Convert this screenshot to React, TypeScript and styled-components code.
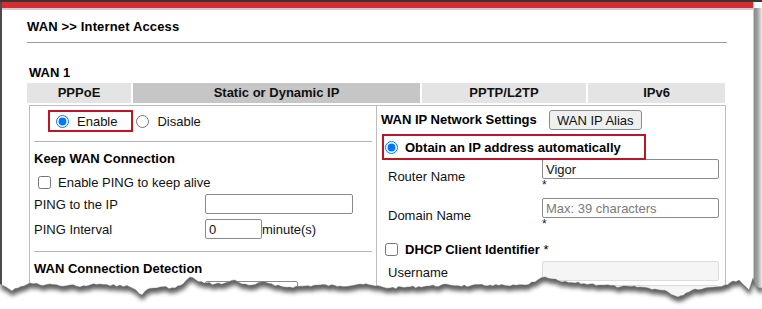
import React from "react";
import styled, { createGlobalStyle } from "styled-components";

const GlobalStyle = createGlobalStyle`
  html, body {
    margin: 0;
    padding: 0;
    background: #fff;
  }
  body {
    font-family: "Liberation Sans", Arial, sans-serif;
    font-size: 13px;
    color: #111;
  }
`;

// ---- torn bottom edge (drawing) ----
const tearKeys: [number, number][] = [
  [0, 284], [6, 287], [12, 291], [18, 288], [24, 286], [30, 283], [40, 285],
  [50, 284], [60, 286], [70, 285], [80, 287], [90, 285], [100, 284], [110, 286],
  [120, 285], [130, 287], [136, 290], [142, 295], [148, 289], [160, 287],
  [175, 288], [183, 284], [190, 277], [196, 280], [204, 283], [215, 284],
  [225, 283], [235, 280], [242, 284], [252, 285], [265, 282], [275, 286],
  [290, 287], [305, 286], [320, 285], [340, 286], [360, 284], [375, 286],
  [390, 288], [410, 287], [430, 286], [450, 285], [470, 286], [490, 285],
  [510, 286], [525, 285], [535, 282], [545, 277], [552, 279], [562, 282],
  [575, 283], [590, 284], [605, 285], [620, 287], [640, 287], [655, 289],
  [668, 292], [678, 297], [686, 293], [695, 289], [705, 288], [715, 287],
  [725, 285], [733, 281], [739, 280], [745, 286], [749, 290], [753, 278],
  [756, 286], [762, 288],
];

function buildTear() {
  const pts: [number, number][] = [];
  let seed = 7;
  const rnd = () => {
    seed = (seed * 9301 + 49297) % 233280;
    return seed / 233280;
  };
  for (let i = 0; i < tearKeys.length - 1; i++) {
    const [x0, y0] = tearKeys[i];
    const [x1, y1] = tearKeys[i + 1];
    const steps = Math.max(1, Math.round((x1 - x0) / 3));
    for (let s = 0; s < steps; s++) {
      const t = s / steps;
      const jitter = s === 0 ? 0 : (rnd() - 0.5) * 2.4;
      pts.push([x0 + (x1 - x0) * t, y0 + (y1 - y0) * t + jitter]);
    }
  }
  pts.push(tearKeys[tearKeys.length - 1]);
  return pts;
}

const tear = buildTear();
const edge = tear.map(([x, y]) => `${x.toFixed(1)},${y.toFixed(1)}`).join(" L");
const belowPath = `M${edge} L762,309 L0,309 Z`;
const paperShadow = `M${tear
  .map(([x, y]) => `${(x + 1).toFixed(1)},${(y + 5).toFixed(1)}`)
  .join(" L")} L762,240 L0,240 Z`;

function TornEdge() {
  return (
    <TearLayer width="762" height="49" viewBox="0 260 762 49">
      <defs>
        <clipPath id="below">
          <path d={belowPath} />
        </clipPath>
        <filter id="soft" x="-5%" y="-50%" width="110%" height="200%">
          <feGaussianBlur stdDeviation="2.2" />
        </filter>
      </defs>
      <path d={belowPath} fill="#fff" />
      <g clipPath="url(#below)">
        <path d={paperShadow} fill="#444" opacity="0.85" filter="url(#soft)" />
      </g>
      <path d={`M${edge}`} fill="none" stroke="#777" strokeWidth="0.6" opacity="0.7" />
    </TearLayer>
  );
}

// ---- page ----
export default function App() {
  return (
    <>
      <GlobalStyle />
      <Shell>
        <Screen>
          <RedBar />
          <Content>
            <Title>WAN &gt;&gt; Internet Access</Title>
            <TitleRule />
            <WanLabel>WAN 1</WanLabel>
            <Tabs>
              <Tab>PPPoE</Tab>
              <Tab active>Static or Dynamic IP</Tab>
              <Tab>PPTP/L2TP</Tab>
              <Tab>IPv6</Tab>
            </Tabs>
            <Panel>
              <LeftCell>
                <EnableRow>
                  <Marked>
                    <Radio type="radio" name="wan" defaultChecked />
                    Enable
                  </Marked>
                  <Choice>
                    <Radio type="radio" name="wan" />
                    Disable
                  </Choice>
                </EnableRow>
                <Rule top={5} />
                <SectionTitle>Keep WAN Connection</SectionTitle>
                <CheckRow>
                  <Check type="checkbox" />
                  Enable PING to keep alive
                </CheckRow>
                <FormRow>
                  <span>PING to the IP</span>
                  <TextInput width={148} readOnly />
                </FormRow>
                <FormRow top={5}>
                  <span>PING Interval</span>
                  <Inline>
                    <TextInput width={57} defaultValue="0" readOnly />
                    minute(s)
                  </Inline>
                </FormRow>
                <Rule top={12} />
                <SectionTitle>WAN Connection Detection</SectionTitle>
                <FormRow top={1} indent={6}>
                  <span>Mode</span>
                  <Select defaultValue="arp">
                    <option value="arp">ARP Detect</option>
                  </Select>
                </FormRow>
              </LeftCell>
              <RightCell>
                <HeaderRow>
                  <SectionTitle as="span">WAN IP Network Settings</SectionTitle>
                  <AliasButton type="button">WAN IP Alias</AliasButton>
                </HeaderRow>
                <ObtainRow>
                  <Radio type="radio" name="ip" defaultChecked />
                  Obtain an IP address automatically
                </ObtainRow>
                <FieldRow top={1}>
                  <FieldLabel>Router Name</FieldLabel>
                  <FieldStack>
                    <TextInput width={177} defaultValue="Vigor" readOnly />
                    <Star>*</Star>
                  </FieldStack>
                </FieldRow>
                <FieldRow top={7}>
                  <FieldLabel>Domain Name</FieldLabel>
                  <FieldStack>
                    <TextInput width={177} placeholder="Max: 39 characters" readOnly />
                    <Star>*</Star>
                  </FieldStack>
                </FieldRow>
                <DhcpRow>
                  <Check type="checkbox" />
                  <b>DHCP Client Identifier</b>
                  <span>&nbsp;*</span>
                </DhcpRow>
                <FieldRow top={1}>
                  <FieldLabel>Username</FieldLabel>
                  <TextInput width={177} disabled />
                </FieldRow>
                <FieldRow top={4}>
                  <FieldLabel>Password</FieldLabel>
                  <TextInput width={177} disabled />
                </FieldRow>
              </RightCell>
            </Panel>
          </Content>
        </Screen>
        <RightShadow />
        <TornEdge />
      </Shell>
    </>
  );
}

const Shell = styled.div`
  position: relative;
  width: 762px;
  height: 309px;
  overflow: hidden;
  box-sizing: border-box;
  border-top: 2px solid #363636;
  display: flex;
  background: #fff;
`;

const Screen = styled.div`
  width: 754px;
  flex-shrink: 0;
  box-sizing: border-box;
  border-left: 2px solid #4b4b4b;
  border-right: 1px solid #c8c8c8;
`;

const RedBar = styled.div`
  height: 6px;
  background: #da2d2b;
  border-bottom: 2px solid #cfcfcf;
`;

const RightShadow = styled.div`
  width: 8px;
  margin-top: 6px;
  background: linear-gradient(to right, #8c8c8c, #9e9e9e 40%, #cfcfcf 80%, #eee);
`;

const TearLayer = styled.svg`
  position: absolute;
  left: 0;
  bottom: 0;
  display: block;
`;

const Content = styled.div`
  padding-left: 25px;
`;

const Title = styled.div`
  margin-top: 9px;
  height: 16px;
  line-height: 16px;
  font-weight: bold;
  font-size: 13px;
  letter-spacing: 0.15px;
  color: #000;
`;

const TitleRule = styled.div`
  margin-top: 7px;
  width: 700px;
  height: 1px;
  background: #9a9a9a;
`;

const WanLabel = styled.div`
  margin-top: 22px;
  padding-left: 2px;
  height: 16px;
  line-height: 16px;
  font-weight: bold;
  color: #000;
`;

const Tabs = styled.div`
  margin-top: 2px;
  display: grid;
  grid-template-columns: 104px 287px 164px 137px;
  column-gap: 2px;
`;

const Tab = styled.div<{ active?: boolean }>`
  height: 20px;
  line-height: 20px;
  text-align: center;
  font-weight: bold;
  color: #111;
  background: ${(p) => (p.active ? "#c6c6c6" : "#e4e4e4")};
`;

const Panel = styled.div`
  margin: 2px 0 0 2px;
  width: 697px;
  box-sizing: border-box;
  border: 1px solid #bdbdbd;
  border-bottom: none;
  display: grid;
  grid-template-columns: 347px 347px;
`;

const LeftCell = styled.div`
  padding: 0 4px;
  border-right: 1px solid #bdbdbd;
`;

const RightCell = styled.div`
  padding: 0 4px;
`;

const EnableRow = styled.div`
  height: 30px;
  display: flex;
  align-items: center;
  padding-left: 16px;
`;

const Choice = styled.label`
  display: inline-flex;
  align-items: center;
  height: 18px;
  padding-left: 5px;
  color: #111;
`;

const Marked = styled.label`
  display: inline-flex;
  align-items: center;
  height: 18px;
  padding: 0 14px 0 6px;
  outline: 2px solid #bd1522;
  color: #111;
`;

const Radio = styled.input`
  width: 13px;
  height: 13px;
  margin: 0 8px 0 0;
  accent-color: #0075ff;
`;

const Check = styled.input`
  width: 13px;
  height: 13px;
  margin: 0 7px 0 4px;
`;

const Rule = styled.div<{ top: number }>`
  margin-top: ${(p) => p.top}px;
  height: 1px;
  background: #b4b4b4;
`;

const SectionTitle = styled.div`
  margin-top: 6px;
  height: 22px;
  line-height: 22px;
  font-weight: bold;
  color: #000;
`;

const CheckRow = styled.label`
  height: 24px;
  display: flex;
  align-items: center;
  color: #111;
`;

const FormRow = styled.div<{ top?: number; indent?: number }>`
  margin-top: ${(p) => p.top ?? 0}px;
  height: 20px;
  display: grid;
  grid-template-columns: ${(p) => 171 - (p.indent ?? 0)}px 1fr;
  align-items: center;
  padding-left: ${(p) => p.indent ?? 0}px;
  color: #111;
`;

const Inline = styled.div`
  display: flex;
  align-items: center;
`;

const TextInput = styled.input<{ width: number }>`
  box-sizing: border-box;
  width: ${(p) => p.width}px;
  height: 20px;
  margin: 0;
  padding: 0 3px;
  border: 1px solid #8a8a8a;
  border-radius: 2px;
  font-family: "Liberation Sans", Arial, sans-serif;
  font-size: 13px;
  color: #111;
  background: #fff;

  &::placeholder {
    color: #7a7a7a;
  }

  &:disabled {
    background: #f5f5f5;
    border-color: #dcdcdc;
  }
`;

const Select = styled.select`
  box-sizing: border-box;
  width: 93px;
  height: 20px;
  margin: 0;
  border: 1px solid #8a8a8a;
  border-radius: 2px;
  font-family: "Liberation Sans", Arial, sans-serif;
  font-size: 13px;
  background: #fff;
`;

const HeaderRow = styled.div`
  height: 28px;
  display: flex;
  align-items: center;
  gap: 12px;

  & > span {
    margin-top: 0;
  }
`;

const AliasButton = styled.button`
  box-sizing: border-box;
  width: 93px;
  height: 20px;
  padding: 0;
  border: 1px solid #8a8a8a;
  border-radius: 3px;
  background: #efefef;
  font-family: "Liberation Sans", Arial, sans-serif;
  font-size: 13px;
  color: #111;
`;

const ObtainRow = styled.label`
  margin: 2px 0 0 3px;
  width: 260px;
  height: 22px;
  box-sizing: border-box;
  display: flex;
  align-items: center;
  padding-left: 1px;
  outline: 2px solid #bd1522;
  font-weight: bold;
  color: #000;

  & > input {
    margin-right: 7px;
  }
`;

const FieldRow = styled.div<{ top: number }>`
  margin-top: ${(p) => p.top}px;
  display: grid;
  grid-template-columns: 161px 177px;
  align-items: center;
  color: #111;
`;

const FieldLabel = styled.span`
  padding: 3px 0 0 7px;
`;

const FieldStack = styled.div`
  display: flex;
  flex-direction: column;
`;

const Star = styled.span`
  height: 12px;
  line-height: 12px;
  font-size: 12px;
  color: #222;
`;

const DhcpRow = styled.label`
  margin-top: 8px;
  height: 22px;
  display: flex;
  align-items: center;
  color: #000;
`;
